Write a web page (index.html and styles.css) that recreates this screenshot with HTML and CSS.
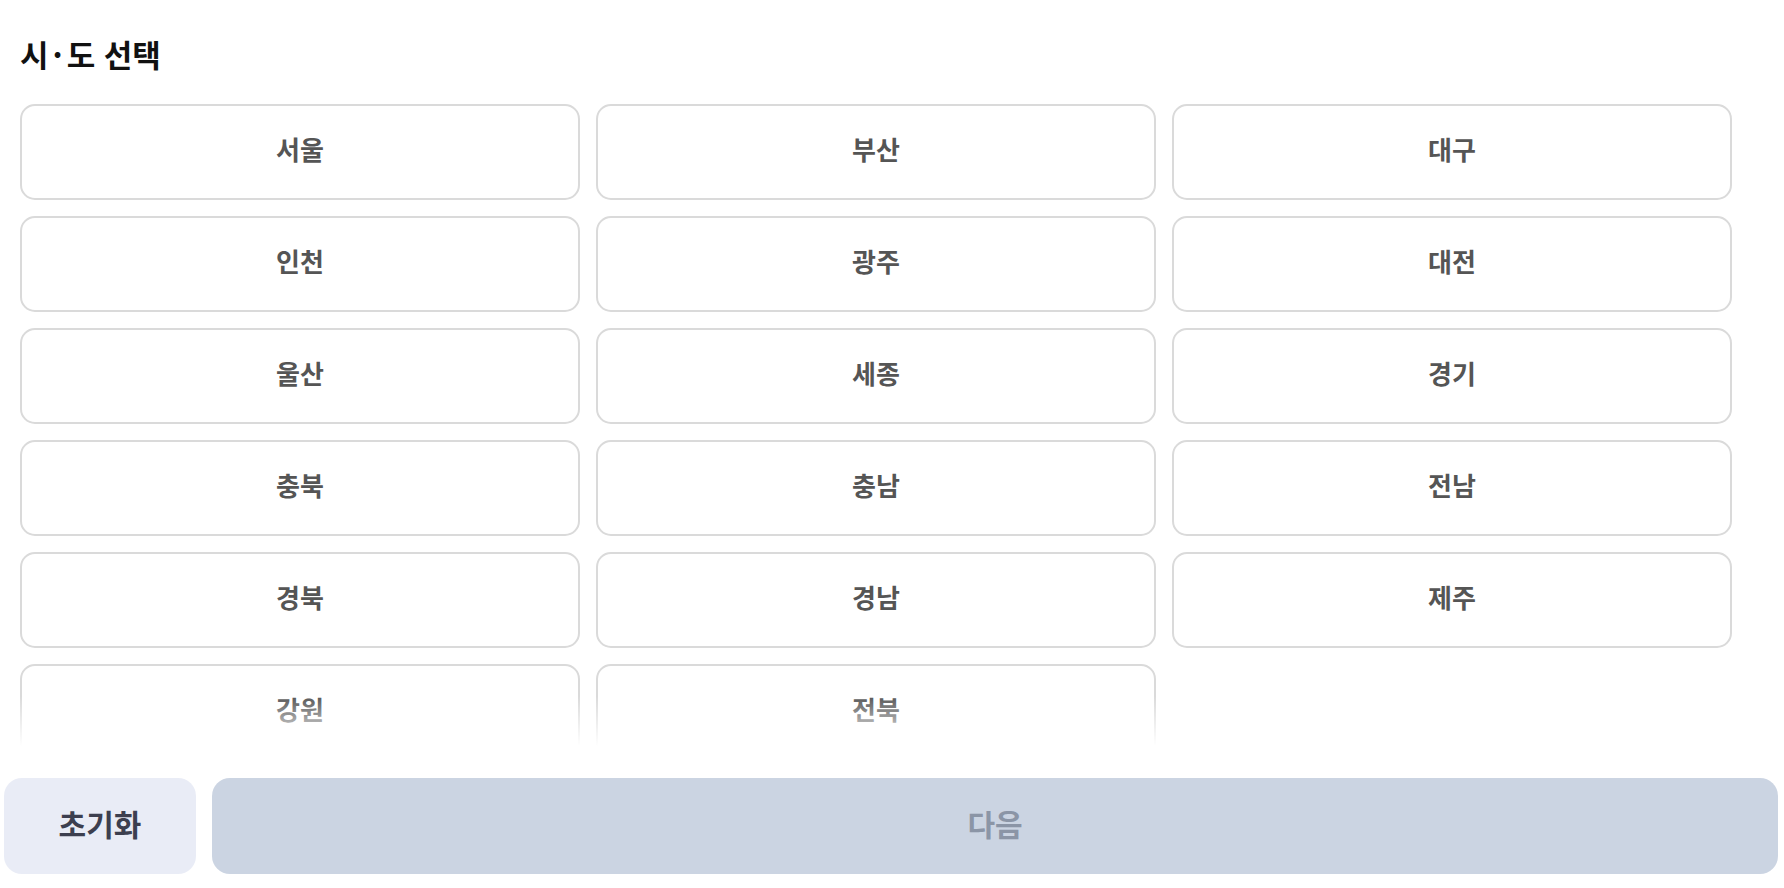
FILE: index.html
```html
<!DOCTYPE html>
<html lang="ko">
<head>
<meta charset="utf-8">
<title>시·도 선택</title>
<link rel="stylesheet" href="styles.css">
</head>
<body>
<div class="page">
  <div class="scroll-wrap">
    <div class="scroll">
      <h2 class="title">시<span class="dot">·</span>도 선택</h2>
      <div class="grid">
        <button class="region">서울</button>
        <button class="region">부산</button>
        <button class="region">대구</button>
        <button class="region">인천</button>
        <button class="region">광주</button>
        <button class="region">대전</button>
        <button class="region">울산</button>
        <button class="region">세종</button>
        <button class="region">경기</button>
        <button class="region">충북</button>
        <button class="region">충남</button>
        <button class="region">전남</button>
        <button class="region">경북</button>
        <button class="region">경남</button>
        <button class="region">제주</button>
        <button class="region">강원</button>
        <button class="region">전북</button>
      </div>
    </div>
    <div class="fade"></div>
  </div>
  <div class="actions">
    <button class="btn reset">초기화</button>
    <button class="btn next" disabled>다음</button>
  </div>
</div>
</body>
</html>
```

FILE: styles.css
```css
* { box-sizing: border-box; }
html, body { margin: 0; padding: 0; background: #fff; }
body {
  font-family: "Noto Sans CJK KR", "Noto Sans", sans-serif;
  width: 1784px;
  height: 888px;
  overflow: hidden;
}
.page {
  display: flex;
  flex-direction: column;
  height: 888px;
}
.scroll-wrap {
  position: relative;
  height: 746px;
  flex: 0 0 746px;
}
.scroll {
  height: 100%;
  overflow-y: auto;
  padding: 0 0 24px 20px;
}
.scroll::-webkit-scrollbar { width: 4px; }
.scroll::-webkit-scrollbar-track { background: #e9e9e9; }
.scroll::-webkit-scrollbar-thumb { background: #e6e6e6; }
.title {
  margin: 0;
  padding-top: 32px;
  font-size: 31px;
  line-height: 44px;
  font-weight: 700;
  color: #111;
  margin-bottom: 28px;
}
.title .dot {
  margin: 0 4px;
}
.grid {
  display: grid;
  grid-template-columns: repeat(3, 560px);
  grid-auto-rows: 96px;
  gap: 16px;
}
.region {
  font-family: inherit;
  background: #fff;
  border: 2px solid #dadada;
  border-radius: 15px;
  font-size: 26px;
  font-weight: 600;
  color: #555;
  padding: 0 0 8px 0;
  cursor: pointer;
}
.fade {
  position: absolute;
  left: 0;
  right: 4px;
  bottom: 0;
  height: 50px;
  background: linear-gradient(to bottom, rgba(255,255,255,0), #fff);
  pointer-events: none;
}
.actions {
  display: flex;
  gap: 16px;
  padding: 32px 6px 14px 4px;
}
.btn {
  font-family: inherit;
  border: none;
  border-radius: 18px;
  height: 96px;
  font-size: 30px;
  font-weight: 700;
  padding: 0 0 6px 0;
}
.reset {
  flex: 0 0 192px;
  background: #e9ecf6;
  color: #3c3f4f;
}
.next {
  flex: 1;
  background: #cbd4e2;
  color: #8b95a6;
}
```
